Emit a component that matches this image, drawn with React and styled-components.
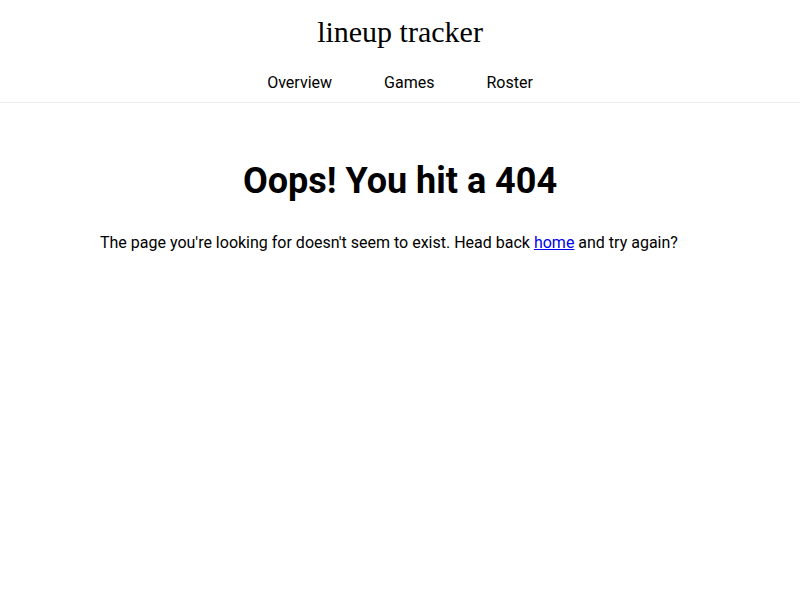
import React from 'react'
import styled, { createGlobalStyle } from 'styled-components'

const GlobalStyle = createGlobalStyle`
  body {
    margin: 0;
    background: #ffffff;
    font-family: Roboto, "Liberation Sans", sans-serif;
    color: #000000;
  }
`

const Header = styled.header`
  border-bottom: 1px solid #eeeeee;
`
const Title = styled.h1`
  margin: 0;
  padding-top: 13px;
  font-family: "Liberation Serif", serif;
  font-weight: 400;
  font-size: 30px;
  line-height: 38px;
  text-align: center;
`
const Nav = styled.nav`
  display: flex;
  justify-content: center;
  padding: 22px 0 9px;
`
const NavLink = styled.a`
  padding: 0 26px;
  font-size: 16px;
  line-height: 20px;
  color: #000000;
  text-decoration: none;
`
const Main = styled.main`
  width: 600px;
  margin: 0 auto;
  padding-top: 56px;
`
const Heading = styled.h2`
  margin: 0 0 30px;
  font-size: 36px;
  line-height: 44px;
  font-weight: 700;
  text-align: center;
`
const Text = styled.p`
  margin: 0;
  font-size: 16px;
  line-height: 20px;
  a {
    color: #0000ee;
  }
`

const App = () => {
  return (
    <>
      <GlobalStyle />
      <Header>
        <Title>lineup tracker</Title>
        <Nav>
          <NavLink href="#">Overview</NavLink>
          <NavLink href="#">Games</NavLink>
          <NavLink href="#">Roster</NavLink>
        </Nav>
      </Header>
      <Main>
        <Heading>Oops! You hit a 404</Heading>
        <Text>
          The page you're looking for doesn't seem to exist. Head back <a href="#">home</a> and try again?
        </Text>
      </Main>
    </>
  )
}

export default App
